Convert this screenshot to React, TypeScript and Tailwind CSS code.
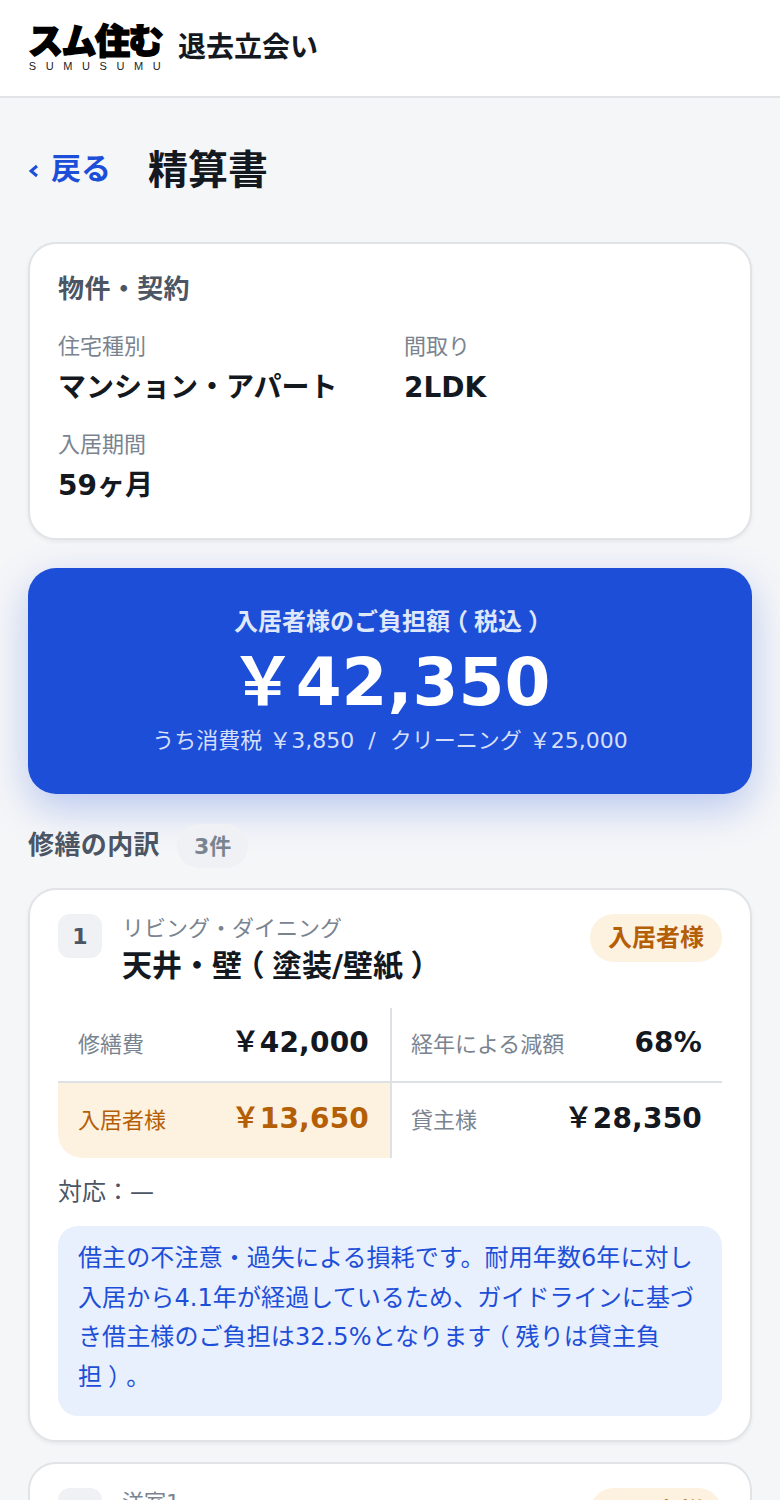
const FONT = "font-['DejaVu_Sans','Noto_Sans_CJK_JP',sans-serif]";

// full-width brackets sit centred in their cell in the picture
const Open = () => <span className="px-[0.25em] [font-feature-settings:'halt']">（</span>;
const Close = () => <span className="px-[0.25em] [font-feature-settings:'halt']">）</span>;

const Field = ({ label, value }: { label: string; value: string }) => (
  <div>
    <p className="text-[22px] leading-[32px] text-[#7a8490]">{label}</p>
    <p className="mt-[5px] text-[28px] leading-[40px] font-bold text-[#14181f]">{value}</p>
  </div>
);

const Cell = ({ label, value, tint, right, bottom }: { label: string; value: string; tint?: boolean; right?: boolean; bottom?: boolean }) => (
  <div
    className={`flex h-[75px] items-center justify-between border-[#dde1e6] ${right ? "border-r-2 pr-[21px] pl-5" : "pr-5 pl-[19px]"} ${bottom ? "border-b-2" : ""} ${tint ? "bg-[#fdf1e0] rounded-bl-[24px]" : ""}`}
  >
    <span className={`text-[22px] ${tint ? "text-[#b45f06]" : "text-[#7a8490]"}`}>{label}</span>
    <span className={`mb-[3px] text-[28px] font-bold tracking-[0.2px] ${tint ? "text-[#b45f06]" : "text-[#14181f]"}`}>{value}</span>
  </div>
);

export default function App() {
  return (
    <div className={`${FONT} h-[1500px] overflow-hidden bg-[#f5f6f8] [text-spacing-trim:space-all]`}>
      {/* header */}
      <header className="flex h-[98px] items-center gap-4 border-b-2 border-[#e1e3e6] bg-white pl-7">
        <div className="flex flex-col items-center">
          <span className="text-[35px] leading-[34px] font-black tracking-[-1.5px] text-black [-webkit-text-stroke:1.5px_black]">スム住む</span>
          <span className="mt-[1px] mr-[-9px] font-['Liberation_Sans'] text-[11px] leading-[12px] tracking-[9.6px] text-[#222]">SUMUSUMU</span>
        </div>
        <span className="text-[28px] font-bold text-[#14181f]">退去立会い</span>
      </header>

      <main className="px-7">
        <div className="flex h-[144px] items-center gap-[37px]">
          <a className="mb-[3px] ml-[1px] flex items-center gap-[12px] text-[30px] font-bold text-[#1d4ed8]">
            <svg className="mt-[4px]" width="10" height="14" viewBox="0 0 10 14" fill="none" stroke="#1d4ed8" strokeWidth="3">
              <path d="M8 2 L2 7 L8 12" />
            </svg>
            戻る
          </a>
          <h1 className="text-[40px] font-bold text-[#14181f]">精算書</h1>
        </div>

        {/* property */}
        <section className="h-[298px] rounded-[28px] border-2 border-[#e1e3e6] bg-white px-7 pt-[27px] shadow-[0_2px_4px_rgba(0,0,0,0.06)]">
          <h2 className="text-[26px] leading-[36px] font-bold tracking-[0.4px] text-[#4b5563]">物件・契約</h2>
          <div className="mt-[24px] grid grid-cols-2 gap-x-7 gap-y-[21px]">
            <Field label="住宅種別" value="マンション・アパート" />
            <Field label="間取り" value="2LDK" />
            <Field label="入居期間" value="59ヶ月" />
          </div>
        </section>

        {/* total */}
        <section className="mt-7 flex h-[226px] flex-col items-center rounded-[28px] bg-[#1c4ed8] pt-[37px] text-white shadow-[0_14px_40px_rgba(29,78,216,0.28)]">
          <p className="text-[24px] leading-[34px] font-bold whitespace-nowrap text-[#dfe7fb]">入居者様のご負担額<Open />税込<Close /></p>
          <p className="mt-[2px] text-[66px] leading-[84px] font-bold">￥42,350</p>
          <p className="text-[22px] leading-[32px] text-[#d5dffa]">うち消費税 ￥3,850 &nbsp;/&nbsp; クリーニング ￥25,000</p>
        </section>

        {/* heading */}
        <div className="mt-[30px] flex h-[44px] items-center gap-[17px]">
          <h2 className="mb-[2px] text-[26px] font-bold tracking-[0.4px] text-[#4b5563]">修繕の内訳</h2>
          <span className="flex h-[44px] items-center rounded-full bg-[#eff1f4] px-[17px] text-[22px] font-bold text-[#7a8490]">3件</span>
        </div>

        {/* item */}
        <section className="mt-5 h-[554px] rounded-[28px] border-2 border-[#e1e3e6] bg-white px-7 pt-6 shadow-[0_2px_4px_rgba(0,0,0,0.06)]">
          <div className="flex items-start">
            <span className="flex h-11 w-11 items-center justify-center rounded-[12px] bg-[#eff1f4] text-[22px] font-bold text-[#4b5563]">1</span>
            <div className="ml-5 flex-1">
              <p className="mt-[1px] text-[22px] leading-[28px] text-[#7a8490]">リビング・ダイニング</p>
              <p className="mt-[2px] text-[30px] leading-[42px] font-bold text-[#14181f]">天井・壁<Open />塗装/壁紙<Close /></p>
            </div>
            <span className="flex h-12 items-center rounded-full bg-[#fdf1e0] px-[18px] text-[24px] font-bold text-[#b45f06]">入居者様</span>
          </div>
          <div className="mt-[21px] grid grid-cols-[334px_1fr] overflow-hidden rounded-[24px]">
            <Cell label="修繕費" value="￥42,000" right bottom />
            <Cell label="経年による減額" value="68%" bottom />
            <Cell label="入居者様" value="￥13,650" tint right />
            <Cell label="貸主様" value="￥28,350" />
          </div>
          <p className="mt-[16px] text-[24px] leading-[36px] text-[#4b5563]">対応：—</p>
          <div className="mt-[16px] rounded-[20px] bg-[#e8effd] px-5 pt-[13px] pb-[19px] text-[24px] leading-[39.6px] tracking-[0.1px] text-[#1d4ed8]">
            借主の不注意・過失による損耗です。耐用年数6年に対し入居から4.1年が経過しているため、ガイドラインに基づき借主様のご負担は32.5%となります<Open />残りは貸主負担<Close />。
          </div>
        </section>

        <section className="mt-5 h-[300px] rounded-[28px] border-2 border-[#e1e3e6] bg-white px-7 pt-6">
          <div className="flex items-start">
            <span className="flex h-11 w-11 items-center justify-center rounded-[12px] bg-[#eff1f4] text-[22px] font-bold text-[#4b5563]">2</span>
            <div className="ml-5 flex-1">
              <p className="mt-[1px] text-[22px] leading-[28px] text-[#7a8490]">洋室1</p>
            </div>
            <span className="flex h-12 items-center rounded-full bg-[#fdf1e0] px-[18px] text-[24px] font-bold text-[#b45f06]">入居者様</span>
          </div>
        </section>
      </main>
    </div>
  );
}
